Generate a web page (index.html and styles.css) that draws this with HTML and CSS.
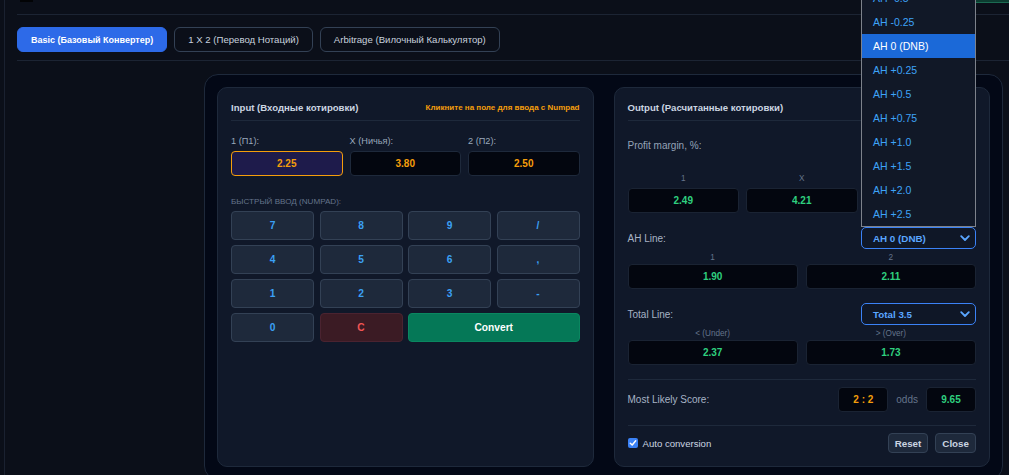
FILE: index.html
```html
<!DOCTYPE html>
<html lang="ru">
<head>
<meta charset="utf-8">
<title>Odds Converter</title>
<link rel="stylesheet" href="styles.css">
</head>
<body>
<div class="shell">
  <div class="topstrip"><span class="top-mark"></span><span class="top-green"></span></div>
  <nav class="tabs">
    <button class="tab active">Basic (Базовый Конвертер)</button>
    <button class="tab">1 X 2 (Перевод Нотаций)</button>
    <button class="tab">Arbitrage (Вилочный Калькулятор)</button>
  </nav>
  <main class="stage">
    <div class="calc">
      <section class="panel">
        <header class="panel-head">
          <h2 class="panel-title">Input (Входные котировки)</h2>
          <span class="hint">Кликните на поле для ввода с Numpad</span>
        </header>
        <div class="inputs">
          <div class="field"><span class="field-label">1 (П1):</span><span class="odd-input active">2.25</span></div>
          <div class="field"><span class="field-label">X (Ничья):</span><span class="odd-input">3.80</span></div>
          <div class="field"><span class="field-label">2 (П2):</span><span class="odd-input">2.50</span></div>
        </div>
        <div class="numpad-label">БЫСТРЫЙ ВВОД (NUMPAD):</div>
        <div class="numpad">
          <button class="key">7</button>
          <button class="key">8</button>
          <button class="key">9</button>
          <button class="key">/</button>
          <button class="key">4</button>
          <button class="key">5</button>
          <button class="key">6</button>
          <button class="key">,</button>
          <button class="key">1</button>
          <button class="key">2</button>
          <button class="key">3</button>
          <button class="key">-</button>
          <button class="key">0</button>
          <button class="key key-clear">C</button>
          <button class="key key-convert">Convert</button>
        </div>
      </section>

      <section class="panel">
        <header class="panel-head">
          <h2 class="panel-title">Output (Расчитанные котировки)</h2>
        </header>
        <div class="pm-title">Profit margin, %:</div>
        <div class="grid3 pm-grid">
          <div class="cell"><span class="cell-label">1</span><span class="odd-out">2.49</span></div>
          <div class="cell"><span class="cell-label">X</span><span class="odd-out">4.21</span></div>
          <div class="cell"><span class="cell-label">2</span><span class="odd-out">2.77</span></div>
        </div>

        <div class="line-row">
          <span class="row-label">AH Line:</span>
          <div class="select-wrap">
            <ul class="options">
              <li>AH -0.5</li>
              <li>AH -0.25</li>
              <li class="sel">AH 0 (DNB)</li>
              <li>AH +0.25</li>
              <li>AH +0.5</li>
              <li>AH +0.75</li>
              <li>AH +1.0</li>
              <li>AH +1.5</li>
              <li>AH +2.0</li>
              <li>AH +2.5</li>
            </ul>
            <div class="select"><span>AH 0 (DNB)</span><svg class="chev" width="10" height="7" viewBox="0 0 10 7"><polyline points="1.2,1.2 5,5 8.8,1.2"/></svg></div>
          </div>
        </div>
        <div class="grid2 sub-grid">
          <div class="cell"><span class="cell-label">1</span><span class="odd-out">1.90</span></div>
          <div class="cell"><span class="cell-label">2</span><span class="odd-out">2.11</span></div>
        </div>

        <div class="line-row">
          <span class="row-label">Total Line:</span>
          <div class="select-wrap">
            <div class="select"><span>Total 3.5</span><svg class="chev" width="10" height="7" viewBox="0 0 10 7"><polyline points="1.2,1.2 5,5 8.8,1.2"/></svg></div>
          </div>
        </div>
        <div class="grid2 sub-grid">
          <div class="cell"><span class="cell-label">&lt; (Under)</span><span class="odd-out">2.37</span></div>
          <div class="cell"><span class="cell-label">&gt; (Over)</span><span class="odd-out">1.73</span></div>
        </div>

        <div class="score-row">
          <span class="row-label score-label">Most Likely Score:</span>
          <span class="mini-box score">2 : 2</span>
          <span class="odds-word">odds</span>
          <span class="mini-box green">9.65</span>
        </div>

        <div class="foot-row">
          <label class="auto"><span class="check"><svg width="8" height="8" viewBox="0 0 8 8"><polyline points="1.3,4.2 3.2,6 6.7,1.8"/></svg></span>Auto conversion</label>
          <div class="foot-btns">
            <button class="small-btn">Reset</button>
            <button class="small-btn">Close</button>
          </div>
        </div>
      </section>
    </div>
  </main>
</div>
</body>
</html>
```

FILE: styles.css
```css
html, body {
  margin: 0;
  height: 475px;
  overflow: hidden;
}

body {
  background: #0b0f19;
  font-family: "Liberation Sans", Arial, sans-serif;
  color: #cbd5e1;
}

button {
  font-family: inherit;
  cursor: pointer;
}

.shell {
  margin-left: 4px;
  border-left: 1px solid #1a2130;
  padding-left: 12px;
  min-height: 475px;
}

.topstrip {
  height: 14px;
  border-bottom: 1px solid #1c2433;
  display: flex;
  justify-content: space-between;
  align-items: flex-start;
}

.top-mark {
  margin-left: 3px;
  width: 13px;
  height: 2px;
  background: #020305;
}

.top-green {
  width: 33px;
  height: 2px;
  background: #0d3d31;
  border-bottom: 1px solid #1b6b52;
}

.tabs {
  display: flex;
  gap: 7px;
  padding: 12px 0 8px;
  border-bottom: 1px solid #1c2433;
}

.tab {
  height: 25px;
  padding: 0 13px;
  border: 1px solid #334155;
  border-radius: 6px;
  background: transparent;
  color: #c8d1de;
  font-size: 9.6px;
}

.tab.active {
  background: #2d6ae8;
  border-color: #2d6ae8;
  color: #ffffff;
  font-weight: bold;
  font-size: 9px;
}

.stage {
  padding-top: 13px;
}

.calc {
  margin-left: 187px;
  width: 799px;
  box-sizing: border-box;
  border: 1px solid #1e293b;
  border-radius: 14px;
  background: #030816;
  padding: 12px;
  display: grid;
  grid-template-columns: 1fr 1fr;
  column-gap: 20px;
}

.panel {
  border: 1px solid #1e293b;
  border-radius: 10px;
  background: #101829;
  padding: 12px 13px 13px;
  min-width: 0;
}

.panel-head {
  display: flex;
  justify-content: space-between;
  align-items: center;
  height: 14px;
  padding-bottom: 6px;
  border-bottom: 1px solid #1e293b;
}

.panel-title {
  margin: 0;
  font-size: 9.6px;
  font-weight: bold;
  color: #cbd5e1;
}

.hint {
  font-size: 8px;
  font-weight: bold;
  color: #f59e0b;
}

/* input panel */
.inputs {
  display: grid;
  grid-template-columns: repeat(3, 1fr);
  column-gap: 7px;
  margin-top: 14px;
}

.field {
  display: flex;
  flex-direction: column;
  gap: 4px;
}

.field-label {
  font-size: 9.2px;
  line-height: 12px;
  color: #9aa8bb;
}

.odd-input {
  height: 25px;
  box-sizing: border-box;
  border: 1px solid #1e293b;
  border-radius: 4px;
  background: #03060f;
  color: #f59e0b;
  font-size: 10px;
  font-weight: bold;
  line-height: 23px;
  text-align: center;
}

.odd-input.active {
  background: #1e1b4b;
  border-color: #f59e0b;
}

.numpad-label {
  margin-top: 21px;
  font-size: 8.1px;
  line-height: 10px;
  color: #64748b;
}

.numpad {
  margin-top: 4px;
  display: grid;
  grid-template-columns: repeat(4, 1fr);
  grid-auto-rows: 28.5px;
  gap: 5.5px;
}

.key {
  border: 1px solid #334155;
  border-radius: 4px;
  background: #1e293b;
  color: #3ba0f5;
  font-size: 10.2px;
  font-weight: bold;
  padding: 0;
}

.key-clear {
  background: #3b1b24;
  border-color: #4a2330;
  color: #f25555;
}

.key-convert {
  grid-column: span 2;
  background: #057857;
  border-color: #0a8760;
  color: #ffffff;
}

/* output panel */
.pm-title {
  margin-top: 18px;
  font-size: 10px;
  line-height: 14px;
  color: #94a3b8;
}

.grid3 {
  display: grid;
  grid-template-columns: repeat(3, 1fr);
  column-gap: 7px;
}

.grid2 {
  display: grid;
  grid-template-columns: 1fr 1fr;
  column-gap: 8px;
}

.cell {
  display: flex;
  flex-direction: column;
}

.cell-label {
  font-size: 8.2px;
  line-height: 10px;
  text-align: center;
  color: #64748b;
}

.pm-grid {
  margin-top: 21px;
}

.pm-grid .cell {
  gap: 4px;
}

.sub-grid {
  margin-top: 4px;
}

.sub-grid .cell {
  gap: 1px;
}

.odd-out {
  height: 25px;
  box-sizing: border-box;
  border: 1px solid #1a2333;
  border-radius: 4px;
  background: #03060f;
  color: #2fd07f;
  font-size: 10px;
  font-weight: bold;
  line-height: 23px;
  text-align: center;
}

.line-row {
  margin-top: 14px;
  height: 22px;
  display: flex;
  justify-content: space-between;
  align-items: center;
}

.row-label {
  font-size: 10px;
  color: #a7b3c5;
}

.select-wrap {
  position: relative;
  width: 115px;
  height: 22px;
}

.select {
  height: 22px;
  box-sizing: border-box;
  border: 1px solid #3b82f6;
  border-radius: 5px;
  background: #0f1727;
  padding: 0 5px 0 11px;
  display: flex;
  align-items: center;
  justify-content: space-between;
  color: #5aa6ff;
  font-size: 9.8px;
  font-weight: bold;
}

.chev polyline {
  fill: none;
  stroke: #5aa6ff;
  stroke-width: 1.8;
  stroke-linecap: round;
  stroke-linejoin: round;
}

.options {
  position: absolute;
  right: 0;
  bottom: 100%;
  width: 115px;
  box-sizing: border-box;
  margin: 0;
  padding: 0;
  list-style: none;
  border: 1px solid #7d828b;
  background: #111827;
  z-index: 5;
}

.options li {
  height: 24px;
  line-height: 24px;
  padding-left: 11px;
  font-size: 10.5px;
  color: #3ea3f8;
}

.options li.sel {
  background: #1b69d8;
  color: #ffffff;
}

.score-row {
  margin-top: 14px;
  border-top: 1px solid #1e293b;
  padding: 7px 0 13px;
  display: flex;
  align-items: center;
  gap: 8px;
}

.score-label {
  flex: 1;
}

.mini-box {
  width: 50px;
  height: 25px;
  box-sizing: border-box;
  border: 1px solid #1a2333;
  border-radius: 4px;
  background: #03060f;
  font-size: 10px;
  font-weight: bold;
  line-height: 23px;
  text-align: center;
}

.mini-box.score {
  color: #f59e0b;
}

.mini-box.green {
  color: #2fd07f;
}

.odds-word {
  font-size: 10px;
  color: #64748b;
}

.foot-row {
  border-top: 1px solid #1e293b;
  padding-top: 7px;
  display: flex;
  align-items: center;
  justify-content: space-between;
}

.auto {
  display: flex;
  align-items: center;
  gap: 5px;
  font-size: 9.6px;
  color: #cbd5e1;
}

.check {
  width: 10px;
  height: 10px;
  box-sizing: border-box;
  border-radius: 2px;
  background: #3b82f6;
  display: flex;
  align-items: center;
  justify-content: center;
}

.check polyline {
  fill: none;
  stroke: #ffffff;
  stroke-width: 1.5;
  stroke-linecap: round;
  stroke-linejoin: round;
}

.foot-btns {
  display: flex;
  gap: 7px;
}

.small-btn {
  height: 20px;
  padding: 0 6px;
  border: 1px solid #334155;
  border-radius: 4px;
  background: #1e293b;
  color: #cbd5e1;
  font-size: 9.8px;
  font-weight: bold;
}
```
